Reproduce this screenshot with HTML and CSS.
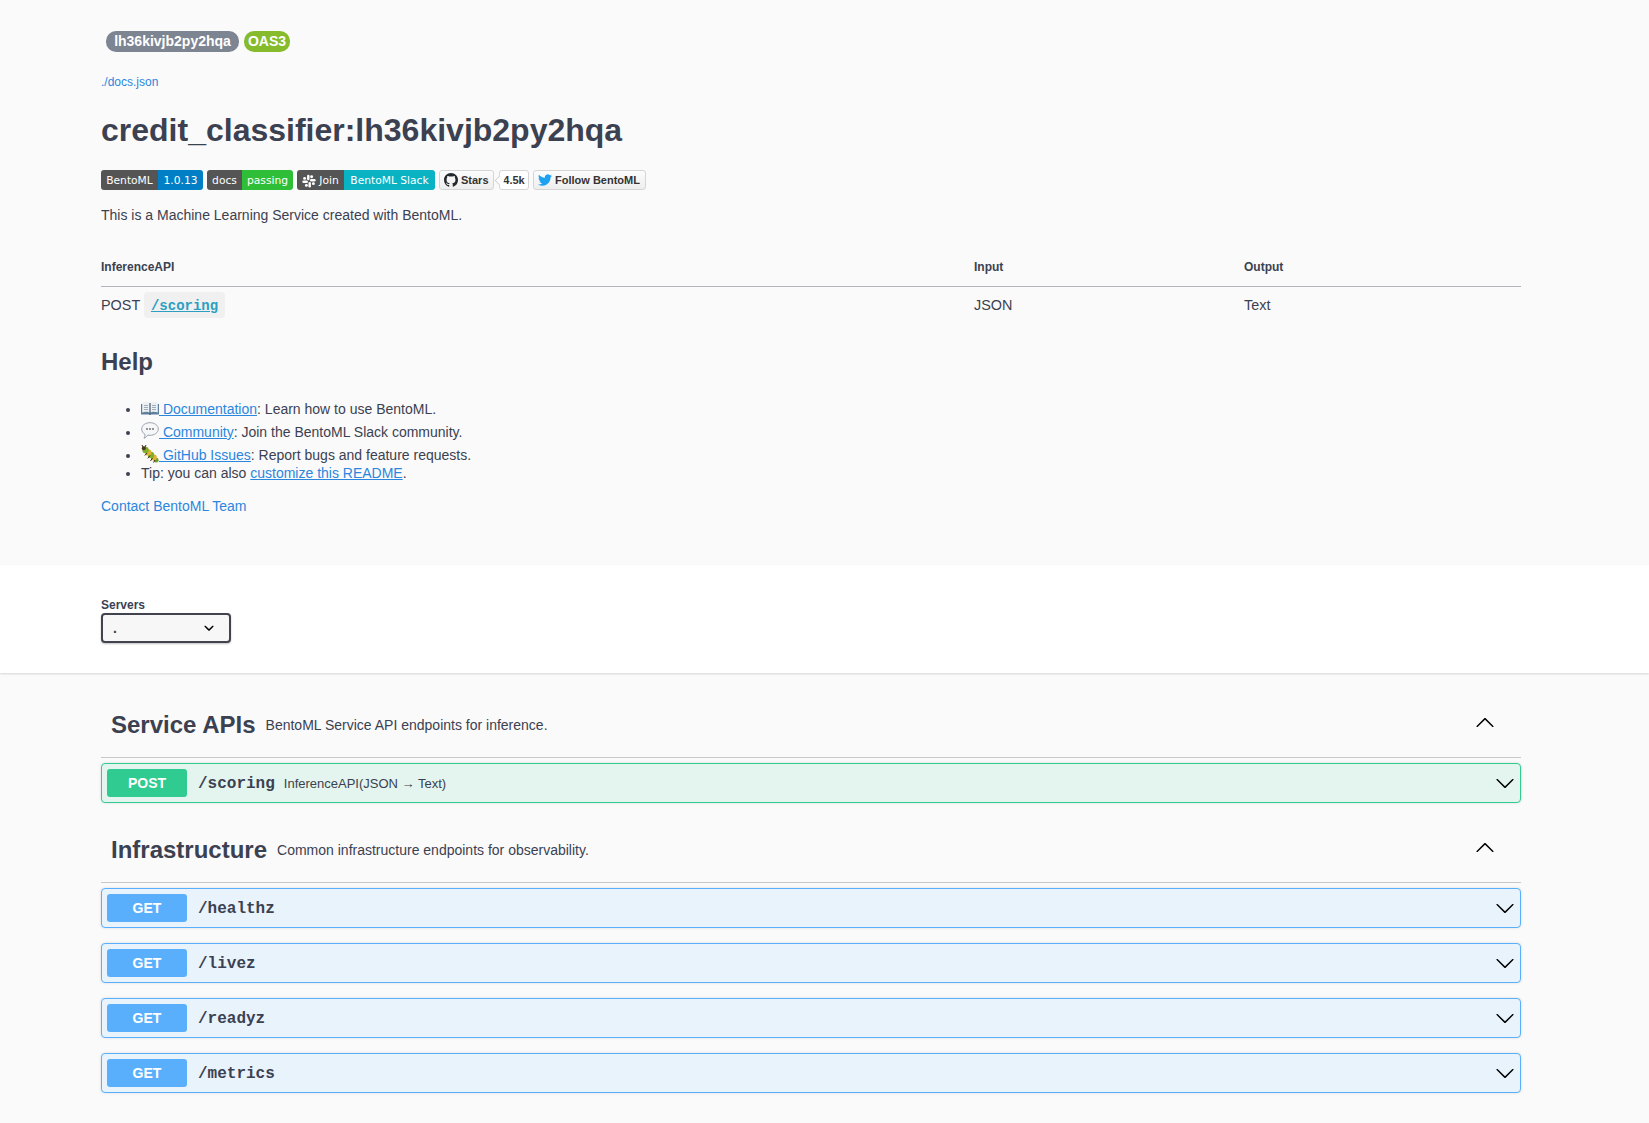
FILE: index.html
```html
<!DOCTYPE html>
<html lang="en">
<head>
  <meta charset="UTF-8">
  <title>credit_classifier:lh36kivjb2py2hqa</title>
  <link rel="stylesheet" href="styles.css">
</head>
<body>

  <section class="info">
    <div class="wrapper">
      <div class="pills">
        <span class="pill pill-version">lh36kivjb2py2hqa</span>
        <span class="pill pill-oas">OAS3</span>
      </div>
      <a class="docs-link" href="#">./docs.json</a>
      <h1>credit_classifier:lh36kivjb2py2hqa</h1>

      <div class="badges">
        <span class="badge">
          <span class="badge-l b-bento-l">BentoML</span><span class="badge-r b-bento-r">1.0.13</span>
        </span>
        <span class="badge">
          <span class="badge-l b-docs-l">docs</span><span class="badge-r b-docs-r">passing</span>
        </span>
        <span class="badge">
          <span class="badge-l b-join-l">
            <svg class="slack-icon" viewBox="0 0 16 16" width="14" height="14">
              <g fill="#fff">
                <rect x="5.800" y="0.800" width="2.800" height="6.400" rx="1.400"/>
                <rect x="9.200" y="5.800" width="6.400" height="2.800" rx="1.400"/>
                <rect x="7.400" y="9" width="2.800" height="6.400" rx="1.400"/>
                <rect x="0.400" y="7.400" width="6.400" height="2.800" rx="1.400"/>
                <circle cx="11" cy="3.200" r="1.700"/>
                <circle cx="13" cy="11" r="1.700"/>
                <circle cx="5" cy="13" r="1.700"/>
                <circle cx="3" cy="5" r="1.700"/>
              </g>
            </svg>Join</span><span class="badge-r b-join-r">BentoML Slack</span>
        </span>
        <span class="social">
          <span class="social-btn btn-stars">
            <svg viewBox="0 0 16 16" width="14" height="14"><path fill="#24292e" d="M8 0C3.58 0 0 3.58 0 8c0 3.54 2.29 6.53 5.47 7.59.4.07.55-.17.55-.38 0-.19-.01-.82-.01-1.49-2.01.37-2.53-.49-2.69-.94-.09-.23-.48-.94-.82-1.13-.28-.15-.68-.52-.01-.53.63-.01 1.08.58 1.23.82.72 1.21 1.87.87 2.33.66.07-.52.28-.87.51-1.07-1.78-.2-3.64-.89-3.64-3.95 0-.87.31-1.59.82-2.15-.08-.2-.36-1.02.08-2.12 0 0 .67-.21 2.2.82.64-.18 1.32-.27 2-.27.68 0 1.36.09 2 .27 1.53-1.04 2.2-.82 2.2-.82.44 1.1.16 1.92.08 2.12.51.56.82 1.27.82 2.15 0 3.07-1.87 3.75-3.65 3.95.29.25.54.73.54 1.48 0 1.07-.01 1.93-.01 2.2 0 .21.15.46.55.38A8.013 8.013 0 0016 8c0-4.42-3.58-8-8-8z"/></svg>
            Stars
          </span>
          <span class="social-count">4.5k</span>
          <span class="social-btn btn-follow">
            <svg viewBox="0 0 24 24" width="14" height="14"><path fill="#1da1f2" d="M23.953 4.57a10 10 0 01-2.825.775 4.958 4.958 0 002.163-2.723c-.951.555-2.005.959-3.127 1.184a4.92 4.92 0 00-8.384 4.482C7.69 8.095 4.067 6.13 1.64 3.162a4.822 4.822 0 00-.666 2.475c0 1.71.87 3.213 2.188 4.096a4.904 4.904 0 01-2.228-.616v.06a4.923 4.923 0 003.946 4.827 4.996 4.996 0 01-2.212.085 4.936 4.936 0 004.604 3.417 9.867 9.867 0 01-6.102 2.105c-.39 0-.779-.023-1.17-.067a13.995 13.995 0 007.557 2.209c9.053 0 13.998-7.496 13.998-13.985 0-.21 0-.42-.015-.63A9.935 9.935 0 0024 4.59z"/></svg>
            Follow BentoML
          </span>
        </span>
      </div>

      <p class="intro">This is a Machine Learning Service created with BentoML.</p>

      <div class="api-table">
        <div class="th">InferenceAPI</div>
        <div class="th">Input</div>
        <div class="th">Output</div>
        <div class="td">POST <code class="code-tag"><a href="#">/scoring</a></code></div>
        <div class="td">JSON</div>
        <div class="td">Text</div>
      </div>

      <h2>Help</h2>
      <ul class="help-list">
        <li class="tall">
          <a href="#"><svg class="emoji emoji-book" viewBox="0 0 18 14" width="18" height="14">
            <path fill="#5f7f9f" d="M0 3h18v10.500H0z"/>
            <path fill="#eef1f4" d="M1.200 1.500c2.800-1 6-1 7.800.5 1.800-1.500 5-1.500 7.800-.5v10c-2.800-1-6-1-7.800.5-1.800-1.500-5-1.500-7.800-.5z"/>
            <path stroke="#44586c" stroke-width="1.200" d="M9 2v12"/>
            <path stroke="#8a9aaa" stroke-width=".8" d="M3 4.500h4M3 6.500h4M3 8.500h4M11 4.500h4M11 6.500h4M11 8.500h4"/>
          </svg> Documentation</a>: Learn how to use BentoML.
        </li>
        <li class="tall">
          <a href="#"><svg class="emoji emoji-bubble" viewBox="0 0 18 17" width="18" height="17">
            <path fill="#f6f7f9" stroke="#9aa3ac" stroke-width="1" d="M9 .7c4.400 0 8.300 2.500 8.300 6.300S13.400 13.300 9 13.300c-.8 0-1.600-.1-2.300-.2C5.900 14.500 4.500 15.800 3 16.300c.6-1 1-2.300 1-3.900C2 11.300.7 9.400.7 7 .7 3.200 4.600.7 9 .7z"/>
            <circle cx="6" cy="7" r=".9" fill="#5f6770"/><circle cx="9" cy="7" r=".9" fill="#5f6770"/><circle cx="12" cy="7" r=".9" fill="#5f6770"/>
          </svg> Community</a>: Join the BentoML Slack community.
        </li>
        <li class="short">
          <a href="#"><svg class="emoji emoji-bug" viewBox="0 0 18 18" width="18" height="18">
            <circle cx="15.200" cy="15.200" r="2.400" fill="#6ea12a"/>
            <circle cx="12.800" cy="12.600" r="3" fill="#e2b034"/>
            <circle cx="10" cy="10" r="3.200" fill="#7fb02c"/>
            <circle cx="7.200" cy="7.400" r="3.200" fill="#e2b034"/>
            <circle cx="4.500" cy="5" r="3.200" fill="#7fb02c"/>
            <circle cx="2.800" cy="3.200" r="2" fill="#4f3420"/>
            <path stroke="#3f2a1a" stroke-width="1" d="M2 2 1 0M4 2l1-2M11.500 13l-2 3M14 15l-1.500 2.500M9 10.500l-2.200 2.800M6 8l-2.200 2.500"/>
          </svg> GitHub Issues</a>: Report bugs and feature requests.
        </li>
        <li>Tip: you can also <a href="#">customize this README</a>.</li>
      </ul>

      <a class="contact" href="#">Contact BentoML Team</a>
    </div>
  </section>

  <section class="scheme">
    <div class="wrapper">
      <label class="servers-label" for="servers">Servers</label>
      <select id="servers" class="servers">
        <option>.</option>
      </select>
    </div>
  </section>

  <main class="wrapper ops">
    <div class="tag-bar">
      <h3>Service APIs</h3>
      <span class="tag-desc">BentoML Service API endpoints for inference.</span>
      <svg class="tag-arrow" viewBox="0 0 20 20" width="20" height="20"><path d="M2.582 13.891c-.272.268-.709.268-.979 0s-.271-.701 0-.969l7.908-7.83c.27-.268.707-.268.978 0l7.908 7.83c.27.268.27.701 0 .969-.271.268-.709.268-.978 0L10 6.750l-7.418 7.141z"/></svg>
    </div>
    <div class="opblock op-post">
      <span class="method">POST</span>
      <span class="path">/scoring</span>
      <span class="summary">InferenceAPI(JSON <span class="summary-arrow">→</span> Text)</span>
      <svg class="op-arrow" viewBox="0 0 20 20" width="20" height="20"><path d="M17.418 6.109c.272-.268.709-.268.979 0s.271.701 0 .969l-7.908 7.830c-.27.268-.707.268-.979 0l-7.908-7.830c-.27-.268-.27-.701 0-.969.271-.268.709-.268.979 0L10 13.250l7.418-7.141z"/></svg>
    </div>

    <div class="tag-bar tag-second">
      <h3>Infrastructure</h3>
      <span class="tag-desc">Common infrastructure endpoints for observability.</span>
      <svg class="tag-arrow" viewBox="0 0 20 20" width="20" height="20"><path d="M2.582 13.891c-.272.268-.709.268-.979 0s-.271-.701 0-.969l7.908-7.83c.27-.268.707-.268.978 0l7.908 7.83c.27.268.27.701 0 .969-.271.268-.709.268-.978 0L10 6.750l-7.418 7.141z"/></svg>
    </div>
    <div class="opblock op-get">
      <span class="method">GET</span>
      <span class="path">/healthz</span>
      <svg class="op-arrow" viewBox="0 0 20 20" width="20" height="20"><path d="M17.418 6.109c.272-.268.709-.268.979 0s.271.701 0 .969l-7.908 7.830c-.27.268-.707.268-.979 0l-7.908-7.830c-.27-.268-.27-.701 0-.969.271-.268.709-.268.979 0L10 13.250l7.418-7.141z"/></svg>
    </div>
    <div class="opblock op-get">
      <span class="method">GET</span>
      <span class="path">/livez</span>
      <svg class="op-arrow" viewBox="0 0 20 20" width="20" height="20"><path d="M17.418 6.109c.272-.268.709-.268.979 0s.271.701 0 .969l-7.908 7.830c-.27.268-.707.268-.979 0l-7.908-7.830c-.27-.268-.27-.701 0-.969.271-.268.709-.268.979 0L10 13.250l7.418-7.141z"/></svg>
    </div>
    <div class="opblock op-get">
      <span class="method">GET</span>
      <span class="path">/readyz</span>
      <svg class="op-arrow" viewBox="0 0 20 20" width="20" height="20"><path d="M17.418 6.109c.272-.268.709-.268.979 0s.271.701 0 .969l-7.908 7.830c-.27.268-.707.268-.979 0l-7.908-7.830c-.27-.268-.27-.701 0-.969.271-.268.709-.268.979 0L10 13.250l7.418-7.141z"/></svg>
    </div>
    <div class="opblock op-get">
      <span class="method">GET</span>
      <span class="path">/metrics</span>
      <svg class="op-arrow" viewBox="0 0 20 20" width="20" height="20"><path d="M17.418 6.109c.272-.268.709-.268.979 0s.271.701 0 .969l-7.908 7.830c-.27.268-.707.268-.979 0l-7.908-7.830c-.27-.268-.27-.701 0-.969.271-.268.709-.268.979 0L10 13.250l7.418-7.141z"/></svg>
    </div>
  </main>

</body>
</html>
```

FILE: styles.css
```css
* {
  box-sizing: border-box;
}

body {
  margin: 0;
  background-color: #fafafa;
  color: #3b4151;
  font-family: "Liberation Sans", Arial, sans-serif;
  font-size: 14px;
}

a {
  color: #2b86de;
}

.wrapper {
  width: 1420px;
  margin-left: 101px;
}

/* info block */
.info {
  height: 565px;
  padding-top: 31px;
  background-color: #fafafa;
}

.pills {
  display: flex;
  gap: 5px;
  height: 21px;
  padding-left: 5px;
}

.pill {
  height: 21px;
  border-radius: 10px;
  color: #fff;
  font-size: 14px;
  font-weight: bold;
  line-height: 21px;
  text-align: center;
}

.pill-version {
  width: 133px;
  background-color: #7d8492;
}

.pill-oas {
  width: 46px;
  background-color: #86bc2c;
}

.docs-link {
  display: block;
  margin-top: 22px;
  font-size: 12px;
  line-height: 16px;
  text-decoration: none;
}

h1 {
  margin: 18px 0 0;
  font-size: 32px;
  line-height: 44px;
}

.badges {
  display: flex;
  gap: 4px;
  height: 20px;
  margin-top: 18px;
}

.badge {
  display: flex;
  height: 20px;
  border-radius: 3px;
  overflow: hidden;
  color: #fff;
  font-family: "DejaVu Sans", Verdana, sans-serif;
  font-size: 10.7px;
  line-height: 20px;
}

.badge-l,
.badge-r {
  display: flex;
  align-items: center;
  justify-content: center;
  padding-top: 1px;
}

.badge-l {
  background-color: #555;
}

.b-bento-l { width: 57px; }
.b-bento-r { width: 45px; background-color: #007ec6; }
.b-docs-l { width: 35px; }
.b-docs-r { width: 51px; background-color: #2fbe38; }
.b-join-l { width: 47px; gap: 3px; }
.b-join-r { width: 91px; background-color: #0ab3c4; }

.social {
  display: flex;
  height: 20px;
  color: #333;
  font-size: 11px;
  font-weight: bold;
  line-height: 18px;
  white-space: nowrap;
}

.social-btn,
.social-count {
  display: flex;
  align-items: center;
  height: 20px;
  border: 1px solid #d5d5d5;
  border-radius: 3px;
}

.social-btn {
  gap: 3px;
  padding-left: 4px;
  background: linear-gradient(#fcfcfc, #eee);
}

.btn-stars { width: 55px; }
.btn-follow { width: 113px; margin-left: 4px; }

.social-count {
  position: relative;
  justify-content: center;
  width: 30px;
  margin-left: 5px;
  background-color: #fff;
}

.social-count::before {
  content: "";
  position: absolute;
  left: -4px;
  top: 6px;
  width: 6px;
  height: 6px;
  border-left: 1px solid #d5d5d5;
  border-bottom: 1px solid #d5d5d5;
  background-color: #fff;
  transform: rotate(45deg);
}

.intro {
  margin: 16px 0 0;
  line-height: 18px;
}

.api-table {
  display: grid;
  grid-template-columns: 873px 270px 1fr;
  margin-top: 30px;
}

.th {
  height: 33px;
  padding-top: 5px;
  border-bottom: 1px solid #b3b3bb;
  font-size: 12px;
  font-weight: bold;
  line-height: 16px;
}

.td {
  height: 38px;
  padding-top: 9px;
  font-size: 14.4px;
  line-height: 18px;
}

.code-tag {
  display: inline-block;
  height: 26px;
  margin: -4px 0;
  padding: 4px 7px 0;
  border-radius: 4px;
  background-color: #f0f0f0;
  font-family: "Liberation Mono", "Courier New", monospace;
  font-size: 14px;
  font-weight: bold;
  line-height: 20px;
  vertical-align: top;
}

.code-tag a {
  color: #2c9fc3;
}

h2 {
  margin: 19px 0 0;
  font-size: 24px;
  line-height: 36px;
}

.help-list {
  margin: 20px 0 0;
  padding-left: 40px;
  line-height: 18px;
}

.help-list li.tall {
  height: 23px;
}

.help-list li.short {
  height: 18px;
}

.emoji {
  margin-top: -6px;
}

.emoji-book {
  vertical-align: -1px;
}

.emoji-bubble {
  vertical-align: -2px;
}

.emoji-bug {
  vertical-align: -3px;
}

.contact {
  display: block;
  margin-top: 15px;
  line-height: 18px;
  text-decoration: none;
}

/* servers */
.scheme {
  height: 108px;
  padding-top: 33px;
  background-color: #fff;
  box-shadow: 0 1px 2px rgba(0, 0, 0, 0.15);
}

.servers-label {
  display: block;
  margin-bottom: 1px;
  font-size: 12px;
  font-weight: bold;
  line-height: 14px;
}

.servers {
  display: block;
  width: 130px;
  height: 30px;
  padding: 0 10px;
  border: 2px solid #41444e;
  border-radius: 4px;
  appearance: none;
  color: #3b4151;
  font-family: "Liberation Sans", Arial, sans-serif;
  font-size: 14px;
  font-weight: bold;
  background: #f7f7f7 url("data:image/svg+xml;utf8,<svg xmlns='http://www.w3.org/2000/svg' viewBox='0 0 20 20'><path d='M13.418 7.859c.271-.268.709-.268.978 0 .270.268.270.701 0 .969l-3.908 3.830c-.270.268-.707.268-.979 0l-3.908-3.830c-.270-.268-.270-.701 0-.969.271-.268.709-.268.978 0L10 11l3.418-3.141z'/></svg>") no-repeat right 10px center / 20px;
  box-shadow: 0 1px 2px rgba(0, 0, 0, 0.25);
}

/* operations */
.ops {
  padding-top: 21px;
}

.tag-bar {
  display: flex;
  align-items: center;
  height: 64px;
  padding-left: 10px;
  padding-bottom: 2px;
  border-bottom: 1px solid #c8c8cc;
}

.tag-second {
  margin-top: 16px;
}

h3 {
  margin: 0;
  font-size: 24px;
  line-height: 32px;
}

.tag-desc {
  margin-left: 10px;
  line-height: 18px;
}

.tag-arrow {
  margin-left: auto;
  margin-right: 26px;
  margin-top: -4px;
}

.opblock {
  display: flex;
  align-items: center;
  height: 40px;
  margin-top: 5px;
  margin-bottom: 15px;
  padding-left: 5px;
  border: 1px solid;
  border-radius: 4px;
  box-shadow: 0 0 3px rgba(0, 0, 0, 0.12);
}

.op-post {
  margin-bottom: 0;
  border-color: #2fcb90;
  background-color: #e3f5ee;
}

.op-post .method {
  background-color: #2fcb90;
}

.op-get {
  border-color: #5aaffd;
  background-color: #e9f3fc;
}

.op-get .method {
  background-color: #5aaffd;
}

.op-get + .op-get {
  margin-top: 0;
}

.method {
  width: 80px;
  height: 28px;
  border-radius: 3px;
  color: #fff;
  font-size: 14px;
  font-weight: bold;
  line-height: 28px;
  text-align: center;
}

.path {
  margin-left: 11px;
  padding-top: 2px;
  font-family: "Liberation Mono", "Courier New", monospace;
  font-size: 16px;
  font-weight: bold;
}

.summary {
  margin-left: 9px;
  font-size: 13px;
}

.summary-arrow {
  font-weight: bold;
}

.op-arrow {
  margin-left: auto;
  margin-right: 5px;
}
```
